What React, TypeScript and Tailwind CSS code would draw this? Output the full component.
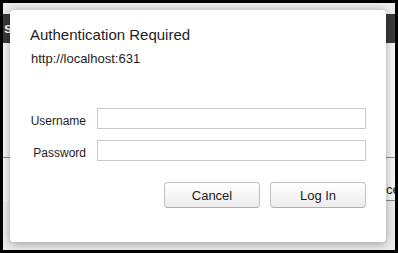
export default function App() {
  return (
    <div className="w-[398px] h-[253px] bg-black p-[3px] font-['Liberation_Sans',Arial,sans-serif]">
      <div className="relative h-full overflow-hidden bg-[#ededed]">
        {/* page behind the dialog */}
        <div className="h-[11px]" />
        <div className="flex h-[29px] items-center bg-[#393939]">
          <span className="ml-[1px] text-[15px] font-bold text-white">s</span>
        </div>
        <div className="h-[114px] bg-[#f6f6f6]" />
        <div className="border-t border-[#8a8a8a] bg-[#f6f6f6]">
          <div className="h-[23px]" />
          <div className="flex justify-end">
            <div className="h-[20px] w-[9px] overflow-hidden border-b border-[#8a8a8a] text-[13px] leading-[18px] text-[#222]">
              ce
            </div>
          </div>
        </div>

        {/* dialog */}
        <div className="absolute left-[7px] top-[6px] h-[233px] w-[376px] rounded-[4px] border-t border-[#d2d2d2] bg-white text-[#1e1e1e] shadow-[0_2px_10px_rgba(0,0,0,0.35)]">
          <div className="pl-[20px] pt-[16px] text-[15px] leading-[18px]">Authentication Required</div>
          <div className="mt-[7px] pl-[21px] text-[13px] leading-[16px]">http://localhost:631</div>

          <div className="mt-[41px] flex items-start">
            <div className="w-[76px] pt-[6px] text-right text-[12px] leading-[14px]">Username</div>
            <input
              type="text"
              className="ml-[11px] h-[21px] w-[269px] border border-[#c9c9c9] bg-white outline-none"
            />
          </div>
          <div className="mt-[11px] flex items-start">
            <div className="w-[76px] pt-[6px] text-right text-[12px] leading-[14px]">Password</div>
            <input
              type="password"
              className="ml-[11px] h-[21px] w-[269px] border border-[#c9c9c9] bg-white outline-none"
            />
          </div>

          <div className="mt-[21px] flex justify-end gap-[10px] pr-[20px]">
            <button className="h-[26px] w-[96px] rounded-[4px] border border-[#c2c2c2] border-b-[#aeaeae] bg-gradient-to-b from-white to-[#ececec] pt-[2px] text-[13px] leading-[16px] text-[#1e1e1e]">
              Cancel
            </button>
            <button className="h-[26px] w-[96px] rounded-[4px] border border-[#c2c2c2] border-b-[#aeaeae] bg-gradient-to-b from-white to-[#ececec] pt-[2px] text-[13px] leading-[16px] text-[#1e1e1e]">
              Log In
            </button>
          </div>
        </div>
      </div>
    </div>
  );
}
